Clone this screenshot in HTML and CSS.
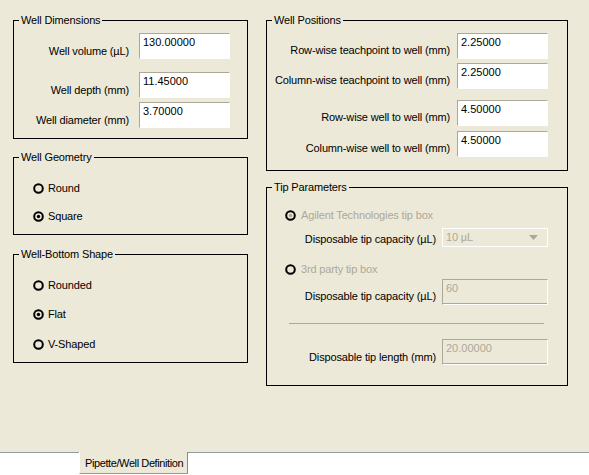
FILE: index.html
```html
<!DOCTYPE html>
<html lang="en">
<head>
    <meta charset="UTF-8">
    <title>Pipette/Well Definition</title>
    <link rel="stylesheet" href="styles.css">
</head>
<body>
    <div class="panel">
        <div class="column left">
            <fieldset class="group dims">
                <legend>Well Dimensions</legend>
                <div class="field">
                    <span class="label">Well volume (µL)</span>
                    <div class="edit">130.00000</div>
                </div>
                <div class="field gap-13">
                    <span class="label">Well depth (mm)</span>
                    <div class="edit">11.45000</div>
                </div>
                <div class="field gap-4">
                    <span class="label">Well diameter (mm)</span>
                    <div class="edit">3.70000</div>
                </div>
            </fieldset>

            <fieldset class="group geometry">
                <legend>Well Geometry</legend>
                <div class="radio">
                    <svg width="11" height="11" viewBox="0 0 11 11"><circle cx="5.5" cy="5.5" r="4.3" fill="none" stroke="#000" stroke-width="2"/></svg>
                    Round
                </div>
                <div class="radio gap-15">
                    <svg width="11" height="11" viewBox="0 0 11 11"><circle cx="5.5" cy="5.5" r="4.3" fill="none" stroke="#000" stroke-width="2"/><circle cx="5.5" cy="5.5" r="1.7" fill="#000"/></svg>
                    Square
                </div>
            </fieldset>

            <fieldset class="group bottom-shape">
                <legend>Well-Bottom Shape</legend>
                <div class="radio">
                    <svg width="11" height="11" viewBox="0 0 11 11"><circle cx="5.5" cy="5.5" r="4.3" fill="none" stroke="#000" stroke-width="2"/></svg>
                    Rounded
                </div>
                <div class="radio gap-16">
                    <svg width="11" height="11" viewBox="0 0 11 11"><circle cx="5.5" cy="5.5" r="4.3" fill="none" stroke="#000" stroke-width="2"/><circle cx="5.5" cy="5.5" r="1.7" fill="#000"/></svg>
                    Flat
                </div>
                <div class="radio gap-17">
                    <svg width="11" height="11" viewBox="0 0 11 11"><circle cx="5.5" cy="5.5" r="4.3" fill="none" stroke="#000" stroke-width="2"/></svg>
                    V-Shaped
                </div>
            </fieldset>
        </div>

        <div class="column right">
            <fieldset class="group positions">
                <legend>Well Positions</legend>
                <div class="field">
                    <span class="label">Row-wise teachpoint to well (mm)</span>
                    <div class="edit">2.25000</div>
                </div>
                <div class="field gap-4">
                    <span class="label">Column-wise teachpoint to well (mm)</span>
                    <div class="edit">2.25000</div>
                </div>
                <div class="field gap-11">
                    <span class="label">Row-wise well to well (mm)</span>
                    <div class="edit">4.50000</div>
                </div>
                <div class="field gap-5">
                    <span class="label">Column-wise well to well (mm)</span>
                    <div class="edit">4.50000</div>
                </div>
            </fieldset>

            <fieldset class="group tips">
                <legend>Tip Parameters</legend>
                <div class="radio disabled">
                    <svg width="11" height="11" viewBox="0 0 11 11"><circle cx="5.5" cy="5.5" r="4.3" fill="none" stroke="#000" stroke-width="2"/><circle cx="5.5" cy="5.5" r="1.7" fill="#aca899"/></svg>
                    Agilent Technologies tip box
                </div>
                <div class="field combo-row gap-7">
                    <span class="label">Disposable tip capacity (µL)</span>
                    <div class="combo">
                        <span>10 µL</span>
                        <svg width="9" height="5" viewBox="0 0 9 5"><path d="M0 0h9L4.5 5z" fill="#aca899"/></svg>
                    </div>
                </div>
                <div class="radio disabled gap-15">
                    <svg width="11" height="11" viewBox="0 0 11 11"><circle cx="5.5" cy="5.5" r="4.3" fill="none" stroke="#000" stroke-width="2"/></svg>
                    3rd party tip box
                </div>
                <div class="field gap-4">
                    <span class="label">Disposable tip capacity (µL)</span>
                    <div class="edit wide off">60</div>
                </div>
                <div class="separator"></div>
                <div class="field length">
                    <span class="label">Disposable tip length (mm)</span>
                    <div class="edit wide off">20.00000</div>
                </div>
            </fieldset>
        </div>
    </div>

    <div class="tabs">
        <div class="tab">Pipette/Well Definition</div>
    </div>
</body>
</html>
```

FILE: styles.css
```css
* {
    margin: 0;
    padding: 0;
    box-sizing: border-box;
}

body {
    width: 589px;
    height: 475px;
    background-color: #fff;
    color: #000;
    font-family: "Liberation Sans", Arial, sans-serif;
    font-size: 11px;
    line-height: 13px;
    letter-spacing: -0.15px;
    overflow: hidden;
}

.panel {
    height: 452px;
    background-color: #ece9d8;
    display: flex;
    gap: 18px;
    padding: 14px 0 0 13px;
}

.column {
    display: flex;
    flex-direction: column;
}

.column.left {
    width: 235px;
}

.column.right {
    width: 302px;
}

/* group boxes */
.group {
    border: 1px solid #000;
}

.group legend {
    margin-left: 5px;
    padding: 0 2px;
    line-height: 13px;
}

.dims {
    padding: 6px 17px 10px 0;
}

.geometry {
    margin-top: 12px;
    padding: 17px 0 12px 0;
}

.bottom-shape {
    margin-top: 13px;
    padding: 17px 0 12px 0;
}

.positions {
    padding: 6px 19px 13px 0;
}

.tips {
    margin-top: 10px;
    padding: 14px 19px 20px 0;
}

/* label + edit rows */
.field {
    display: flex;
    justify-content: flex-end;
    gap: 10px;
}

.field .label {
    padding-top: 12px;
    white-space: nowrap;
}

.positions .field {
    gap: 7px;
}

.positions .field .label {
    padding-top: 11px;
}

.tips .field {
    gap: 6px;
}

.tips .field .label {
    padding-top: 11px;
}

.tips .length .label {
    padding-top: 12px;
}

.edit {
    width: 91px;
    height: 26px;
    background-color: #fff;
    border: 1px solid;
    border-color: #aca899 #fff #fff #aca899;
    padding: 2px 3px;
    letter-spacing: 0;
}

.edit.wide {
    width: 106px;
}

.edit.off {
    background-color: #ece9d8;
    box-shadow: inset 0 -1px 0 #aca899;
    color: #aca899;
}

.tips .combo-row .label {
    padding-top: 5px;
}

.combo {
    width: 106px;
    height: 19px;
    border: 1px solid #fff;
    color: #aca899;
    display: flex;
    align-items: center;
    justify-content: space-between;
    padding: 0 9px 0 3px;
}

/* radio buttons */
.radio {
    display: flex;
    align-items: center;
    gap: 4px;
    height: 13px;
    margin-left: 19px;
    padding-top: 1px;
}

.radio.disabled {
    color: #aca899;
    margin-left: 18px;
    gap: 5px;
}

.separator {
    margin: 18px 4px 15px 22px;
    border-top: 1px solid #aca899;
}

.gap-4 { margin-top: 4px; }
.gap-5 { margin-top: 5px; }
.gap-7 { margin-top: 7px; }
.gap-11 { margin-top: 11px; }
.gap-13 { margin-top: 13px; }
.gap-15 { margin-top: 15px; }
.gap-16 { margin-top: 16px; }
.gap-17 { margin-top: 17px; }

/* tab strip */
.tabs {
    height: 23px;
    border-top: 1px solid #919b9c;
    padding-left: 79px;
}

.tab {
    display: inline-block;
    height: 22px;
    margin-top: -1px;
    background-color: #ece9d8;
    border-left: 1px solid #fff;
    border-right: 1px solid #8c8a7f;
    border-bottom: 1px solid #919b9c;
    padding: 5px 4px 0 5px;
    letter-spacing: -0.4px;
    white-space: nowrap;
}
```
